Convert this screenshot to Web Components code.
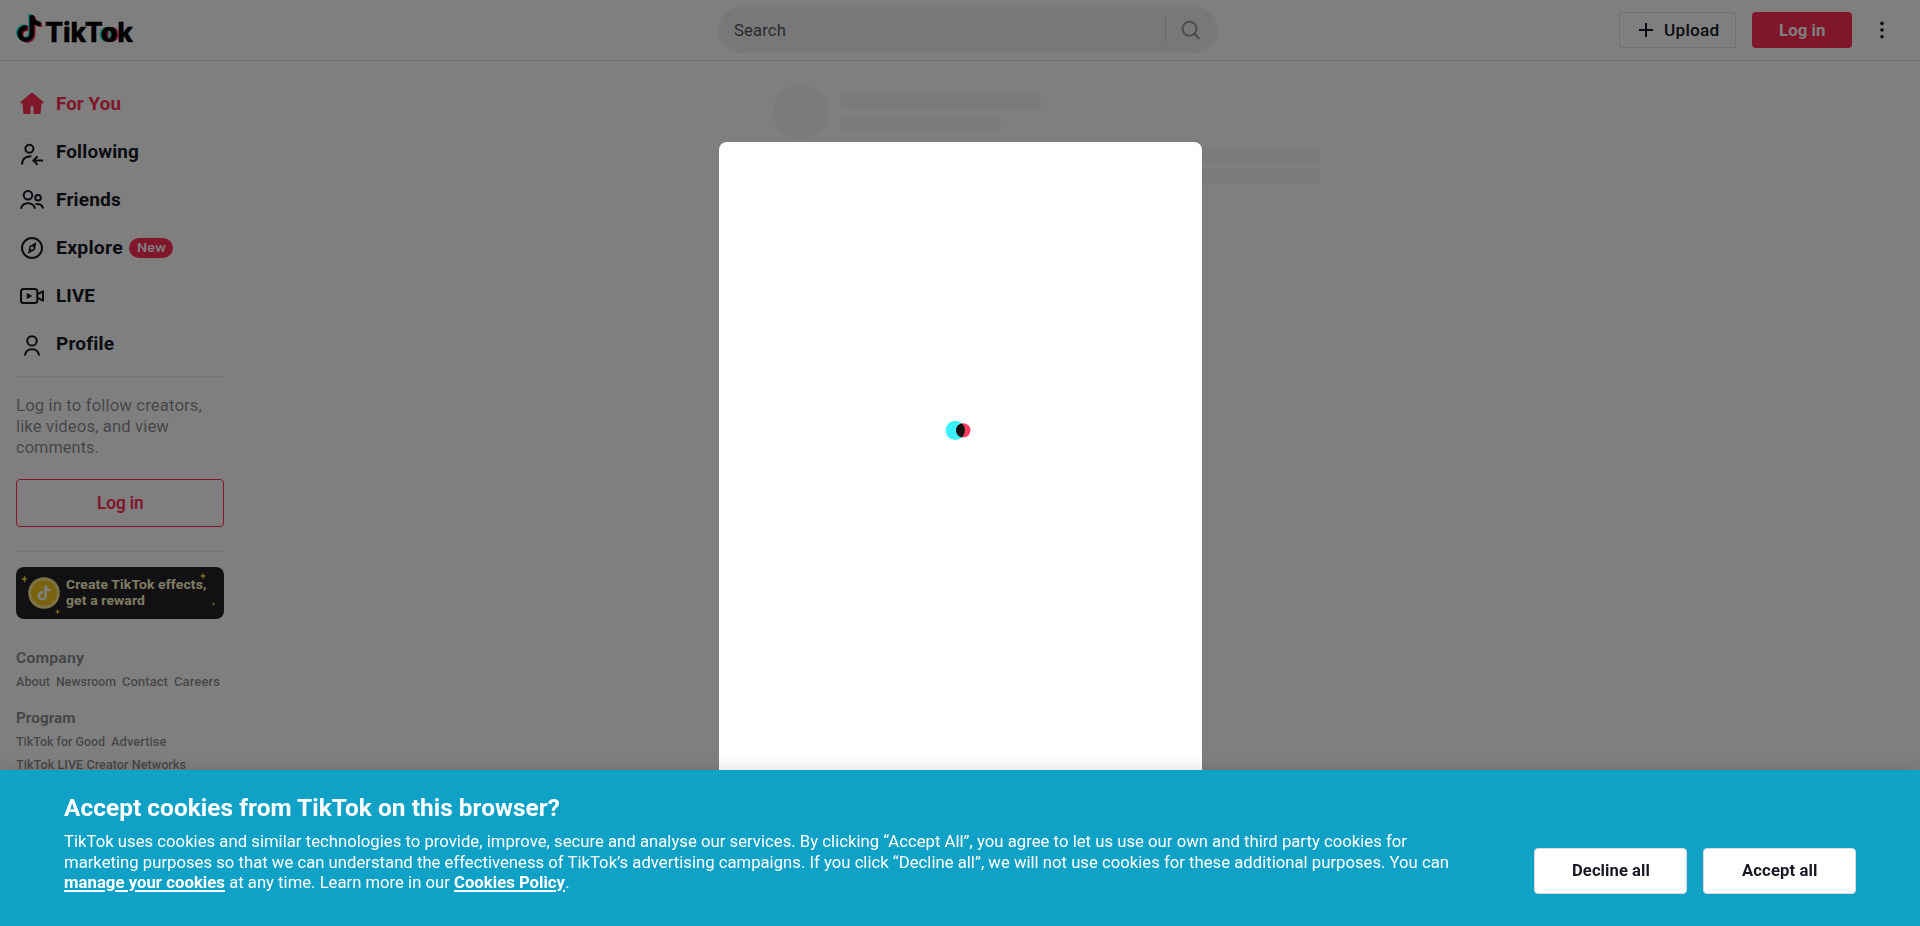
<!DOCTYPE html>
<html lang="en">
<head>
<meta charset="utf-8">
<title>TikTok</title>
<style>
html,body{margin:0;height:100%;overflow:hidden;background:#fff;font-family:Roboto,"Liberation Sans",sans-serif;color:#161823}
</style>
</head>
<body>
<tt-app></tt-app>
<script>
const define=(name,html,after)=>{
  const t=document.createElement('template');t.innerHTML=html;
  customElements.define(name,class extends HTMLElement{
    constructor(){super();this.attachShadow({mode:'open'}).append(t.content.cloneNode(true));}
    connectedCallback(){if(after)after(this,this.shadowRoot);}
  });
};
const NOTE='M12.525.02c1.31-.02 2.61-.01 3.91-.02.08 1.53.63 3.09 1.75 4.17 1.12 1.11 2.7 1.62 4.24 1.79v4.03c-1.44-.05-2.89-.35-4.2-.97-.57-.26-1.1-.59-1.62-.93-.01 2.92.01 5.84-.02 8.75-.08 1.4-.54 2.79-1.35 3.94-1.31 1.92-3.58 3.17-5.91 3.21-1.43.08-2.86-.31-4.08-1.03-2.02-1.19-3.44-3.37-3.65-5.71-.02-.5-.03-1-.01-1.49.18-1.9 1.12-3.72 2.58-4.96 1.66-1.44 3.98-2.13 6.15-1.72.02 1.48-.04 2.96-.04 4.44-.99-.32-2.15-.23-3.02.37-.63.41-1.11 1.04-1.36 1.75-.21.51-.15 1.07-.14 1.61.24 1.64 1.82 3.02 3.5 2.87 1.12-.01 2.19-.66 2.77-1.61.19-.33.4-.67.41-1.06.1-1.79.06-3.57.07-5.36.01-4.03-.01-8.05.02-12.07z';
const ICONS={
  home:'<path transform="translate(0 .8)" fill="currentColor" d="M15.2 4.3a1.2 1.2 0 0 1 1.6 0L27.3 13c.7.7.3 1.7-.7 1.7h-1.1l-.8 9.4c-.1.6-.5 1-1.100 1h-6.200v-7.600h-2.800v7.600H8.400c-.6 0-1-.4-1.100-1l-.8-9.400H5.400c-1 0-1.400-1-.7-1.700z"/>',
  following:'<g fill="none" stroke="currentColor" stroke-width="2"><circle cx="13.400" cy="12.800" r="4"/><path d="M6 28.500C6 22.800 9.500 20 15.500 20.200"/><path d="M27 24.500H17.500M21.600 20.300l-4.200 4.200 4.200 4.200"/></g>',
  friends:'<g fill="none" stroke="currentColor" stroke-width="2"><circle cx="12" cy="11.300" r="4.300"/><circle cx="22" cy="13.800" r="2.800"/><path d="M5 24.700c.8-3.800 3.500-5.400 7-5.400s6.200 1.600 7 5.400M19.500 20.300c3.800-1 6.800.6 7.700 4.300"/></g>',
  explore:'<circle cx="16" cy="16" r="10" fill="none" stroke="currentColor" stroke-width="2"/><path fill="currentColor" fill-rule="evenodd" d="M20.400 10.300 18.900 18 12 21.800 13.400 14zM16 14.400a1.700 1.700 0 1 0 0 3.400 1.700 1.700 0 0 0 0-3.400z"/>',
  live:'<g fill="none" stroke="currentColor" stroke-width="2" stroke-linejoin="round"><rect x="5" y="9" width="16.300" height="14" rx="2.500"/><path d="m21.800 14 5.200-2.700v9.400L21.800 18"/></g><path fill="currentColor" stroke="currentColor" stroke-linejoin="round" d="M11.200 13.500v5l4.300-2.500z"/>',
  profile:'<g fill="none" stroke="currentColor" stroke-width="2"><circle cx="16" cy="12.900" r="4.700"/><path d="M8.800 27.600c.8-4.400 3.600-6.300 7.200-6.300s6.400 1.900 7.200 6.300"/></g>',
  search:'<g fill="none" stroke="currentColor" stroke-width="2"><circle cx="14.500" cy="14.800" r="7"/><path d="m19.500 19.800 5 5.200"/></g>',
  plus:'<path d="M16 9v14M9 16h14" stroke="currentColor" stroke-width="2"/>',
  more:'<g fill="currentColor"><circle cx="16" cy="9.400" r="1.800"/><circle cx="16" cy="16" r="1.800"/><circle cx="16" cy="22.700" r="1.800"/></g>'
};
/* Icon by name on a 32px grid */
define('tt-icon','<style>:host{display:block;width:32px;height:32px;flex:none}svg{display:block;width:32px;height:32px}</style><svg viewBox="0 0 32 32"></svg>',
 (h,r)=>{r.querySelector('svg').innerHTML=ICONS[h.getAttribute('name')];});
/* Single-line text set to a fixed measure, part by glyph width and part by tracking */
define('tt-text','<style>:host{display:block;white-space:pre;flex:none}span{display:inline-block;transform-origin:0 50%}:host([link]) span{text-decoration:underline;text-decoration-thickness:1.500px;text-underline-offset:2px}</style><span><slot></slot></span>',
 (h,r)=>{const w=+h.getAttribute('w');h.style.width=w+'px';const s=r.querySelector('span');
  const n=h.textContent.length,nat=s.getBoundingClientRect().width,k=Math.pow(w/nat,.75);
  s.style.letterSpacing=((w/k-nat)/n).toFixed(4)+'px';s.style.transform='scaleX('+k.toFixed(4)+')';});
define('tt-logo',`<style>:host{display:flex;height:60px}svg{display:block;width:29px;height:32px;margin-top:13px;overflow:visible}
tt-text{font:800 27px/60px Inter,sans-serif;color:#000;padding-top:3px;-webkit-text-stroke:.3px #000}.o{text-shadow:-2.200px 0 #25f4ee,2.200px 0 #fe2c55}</style>
<svg viewBox="0 0 29 32"><path fill="#25f4ee" transform="translate(-1.700 1.300) scale(1.110)" d="${NOTE}"/><path fill="#fe2c55" transform="translate(1.100 3.100) scale(1.110)" d="${NOTE}"/><path fill="#000" transform="translate(-.3 2.200) scale(1.110)" d="${NOTE}"/></svg>
<tt-text w="88">TikT<span class="o">o</span>k</tt-text>`);
define('tt-header',`<style>:host{display:flex;box-sizing:border-box;height:61px;border-bottom:1px solid #d4d4d5;padding:0 22px 0 16px;align-items:flex-start}
.search{display:flex;align-items:center;width:500px;height:46px;margin:7px 0 0 500px;border-radius:23px;background:#f1f1f2;box-sizing:border-box;padding-left:16px}
tt-logo{width:202px}.search tt-text{font-size:16px;color:rgba(22,24,35,.75)}.rule{width:1px;height:28px;background:rgba(22,24,35,.12);margin-left:379px}
.search tt-icon{margin-left:8.500px;color:rgba(22,24,35,.4)}.side{display:flex;margin-left:auto}
.btn{display:flex;align-items:center;box-sizing:border-box;height:36px;margin-top:12px;font-weight:500;font-size:16px}
.up{width:117px;border:1px solid rgba(22,24,35,.12);border-radius:2px;padding-left:10px}.up tt-text{margin-left:2px}
.in{width:100px;border-radius:4px;background:#fe2c55;color:#fff;margin-left:16px;padding-left:27px;font-weight:700}
.more{margin:14px 0 0 14px}</style>
<tt-logo></tt-logo><div class="search"><tt-text w="52">Search</tt-text><div class="rule"></div><tt-icon name="search"></tt-icon></div>
<div class="side"><div class="btn up"><tt-icon name="plus"></tt-icon><tt-text w="55.500">Upload</tt-text></div><div class="btn in"><tt-text w="46.500">Log in</tt-text></div><tt-icon class="more" name="more"></tt-icon></div>`);
define('tt-nav-item',`<style>:host{display:flex;height:48px;align-items:center;font:700 18px/48px Roboto,sans-serif}:host([active]){color:#fe2c55}tt-icon{margin-right:8px}</style><tt-icon></tt-icon><slot></slot>`,
 (h,r)=>{const i=r.querySelector('tt-icon');i.setAttribute('name',h.getAttribute('icon'));i.connectedCallback();});
define('tt-effects-card',`<style>:host{display:block;height:52px;border-radius:8px;background:#232326;position:relative;overflow:hidden}
svg{position:absolute;inset:0}.t{padding:10px 0 0 50px;font:700 13px/16px Roboto,sans-serif;color:#fff5c8}</style>
<svg width="208" height="52" viewBox="0 0 208 52"><circle cx="28" cy="26" r="14.300" fill="#f5c71e" stroke="#f8e490" stroke-width="3"/><path transform="translate(20.600 18.500) scale(.62)" fill="#fff" d="${NOTE}"/>
<g fill="#f8d235"><path d="m8.500 8 1 3 2.500 1-2.500 1-1 3-1-3-2.500-1 2.500-1z"/><path d="m41.500 42 .8 2 2 .8-2 .8-.8 2-.8-2-2-.8 2-.8z"/><path d="m187 5.500.9 2.600 2.300.9-2.300.9-.9 2.600-.9-2.600-2.300-.9 2.300-.9z"/><path d="m197.500 35 .5 1.500 1.500.5-1.500.5-.5 1.500-.5-1.500-1.500-.5 1.500-.5z"/></g></svg>
<div class="t"><tt-text w="140.500">Create TikTok effects,</tt-text><tt-text w="79">get a reward</tt-text></div>`);
define('tt-sidebar',`<style>:host{display:block;width:208px;padding:19px 16px 0;flex:none}
hr{border:0;height:1px;background:rgba(22,24,35,.08);margin:0}.hint{font-size:16px;line-height:21px;color:rgba(22,24,35,.52);padding:18px 0 21px}
.badge{display:flex;justify-content:center;width:44px;height:20px;border-radius:10px;background:#fe2c55;color:#fff;font:500 13.500px/19px Roboto,sans-serif;margin-left:6px}
.login{box-sizing:border-box;height:48px;border:1px solid #fe2c55;border-radius:4px;display:flex;justify-content:center;font:500 18px/46px Roboto,sans-serif;color:#fe2c55;margin-bottom:24px;-webkit-text-stroke:.2px #fe2c55}
tt-effects-card{margin:15px 0 29px}.h{font:700 15px/20px Roboto,sans-serif;color:rgba(22,24,35,.52)}.row{display:flex;font:500 12.500px/17px Roboto,sans-serif;color:rgba(22,24,35,.52);gap:6px;height:17px;margin-bottom:6px}
.links{padding-top:5px;margin-bottom:18px}</style>
<tt-nav-item icon="home" active><tt-text w="65">For You</tt-text></tt-nav-item>
<tt-nav-item icon="following"><tt-text w="83">Following</tt-text></tt-nav-item>
<tt-nav-item icon="friends"><tt-text w="65">Friends</tt-text></tt-nav-item>
<tt-nav-item icon="explore"><tt-text w="67">Explore</tt-text><div class="badge"><tt-text w="29">New</tt-text></div></tt-nav-item>
<tt-nav-item icon="live"><tt-text w="39">LIVE</tt-text></tt-nav-item>
<tt-nav-item icon="profile"><tt-text w="58">Profile</tt-text></tt-nav-item>
<hr style="margin-top:8px"><div class="hint"><tt-text w="186">Log in to follow creators,</tt-text><tt-text w="153">like videos, and view</tt-text><tt-text w="83">comments.</tt-text></div>
<div class="login"><tt-text w="46.500">Log in</tt-text></div><hr>
<tt-effects-card></tt-effects-card>
<div class="h"><tt-text w="68">Company</tt-text></div>
<div class="links"><div class="row"><tt-text w="34">About</tt-text><tt-text w="60">Newsroom</tt-text><tt-text w="46">Contact</tt-text><tt-text w="46">Careers</tt-text></div></div>
<div class="h"><tt-text w="59.500">Program</tt-text></div>
<div class="links"><div class="row"><tt-text w="89">TikTok for Good</tt-text><tt-text w="55.500">Advertise</tt-text></div><div class="row"><tt-text w="170">TikTok LIVE Creator Networks</tt-text></div></div>`);
define('tt-skeleton',`<style>:host{display:block;width:546px;margin:23px 0 0 533px}.b{background:#f7f7f7;height:16px;border-radius:3px}.top{display:flex;gap:12px;margin-bottom:7px}.av{width:56px;height:56px;border-radius:50%;background:#f6f6f6}.l{display:grid;gap:6px;padding-top:10px;align-content:start}</style>
<div class="top"><div class="av"></div><div class="l"><div class="b" style="width:200px"></div><div class="b" style="width:160px"></div></div></div><div class="b" style="margin-bottom:5px"></div><div class="b"></div>`);
define('tt-modal',`<style>:host{position:fixed;inset:0;background:rgba(0,0,0,.5);display:flex;justify-content:center}.m{width:483px;height:642px;margin-top:142px;border-radius:8px;background:#fff;display:flex;justify-content:center}svg{margin-top:276px;height:26px}</style>
<div class="m"><svg width="40" height="26" viewBox="0 0 40 26"><defs><clipPath id="c"><circle cx="15.300" cy="12.400" r="9.600"/></clipPath></defs><circle cx="15.300" cy="12.400" r="9.600" fill="#3cf1ff"/><circle cx="23.300" cy="12.400" r="7.200" fill="#ff3b5f"/><circle cx="23.300" cy="12.400" r="7.200" fill="#111" clip-path="url(#c)"/></svg></div>`);
define('tt-cookie-banner',`<style>:host{position:fixed;left:0;right:0;bottom:0;height:156px;background:#10a2c6;box-shadow:0 0 18px rgba(0,0,0,.14);display:flex;justify-content:space-between;box-sizing:border-box;padding:22px 64px 0;color:#fff}
.title{font:700 24px/32px Roboto,sans-serif;margin-bottom:8px}.line{display:flex;font:400 16.500px/20.500px Roboto,sans-serif;white-space:pre}.line b{font-weight:700}
.btns{display:flex;gap:16px;padding-top:56px}.b{box-sizing:border-box;width:153px;height:46px;border-radius:4px;background:#fff;border:1px solid #dadade;color:#161823;display:flex;justify-content:center;font:700 16px/44px Roboto,sans-serif}</style>
<div><div class="title"><tt-text w="496">Accept cookies from TikTok on this browser?</tt-text></div>
<div class="line"><tt-text w="1343">TikTok uses cookies and similar technologies to provide, improve, secure and analyse our services. By clicking “Accept All”, you agree to let us use our own and third party cookies for</tt-text></div>
<div class="line"><tt-text w="1385">marketing purposes so that we can understand the effectiveness of TikTok’s advertising campaigns. If you click “Decline all”, we will not use cookies for these additional purposes. You can</tt-text></div>
<div class="line"><b><tt-text link w="161">manage your cookies</tt-text></b><tt-text w="229"> at any time. Learn more in our </tt-text><b><tt-text link w="111">Cookies Policy</tt-text></b><tt-text w="5">.</tt-text></div></div>
<div class="btns"><div class="b"><tt-text w="78">Decline all</tt-text></div><div class="b"><tt-text w="75.500">Accept all</tt-text></div></div>`);
define('tt-app',`<style>:host{display:block;height:926px;overflow:hidden}main{display:flex;align-items:flex-start}</style><tt-header></tt-header><main><tt-sidebar></tt-sidebar><tt-skeleton></tt-skeleton></main><tt-modal></tt-modal><tt-cookie-banner></tt-cookie-banner>`);
</script>
</body>
</html>
